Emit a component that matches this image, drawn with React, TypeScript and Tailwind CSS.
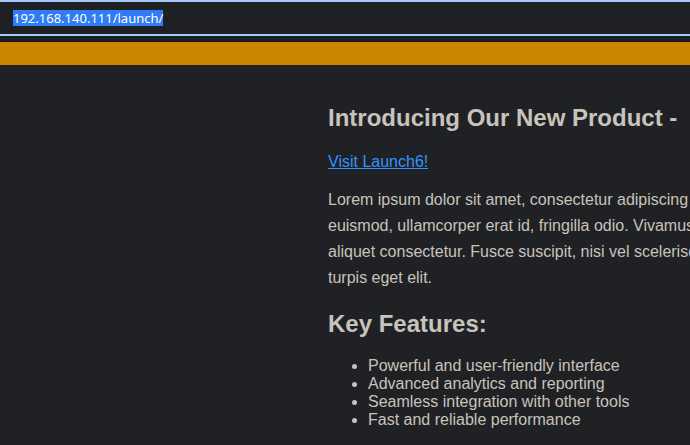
export default function App() {
  return (
    <div className="h-[445px] w-[690px] overflow-hidden bg-[#202124] font-['Liberation_Sans',Arial,sans-serif] text-[#c8c3bc]">
      {/* url bar */}
      <div className="h-9 border-y-2 border-[#a8c7fa] bg-[#1f2023] flex items-center pl-[13px]">
        <span className="bg-[#2f7cf6] text-white text-[13px] leading-[16px] font-['Noto_Sans',sans-serif]">
          192.168.140.111/launch/
        </span>
      </div>
      <div className="h-[6px] bg-[#1c1e25] border-b border-[#15161a]" />
      <div className="h-[23px] bg-[#cc8500]" />

      <div className="flex">
        <div className="w-[328px] shrink-0" />
        <div className="w-[520px] shrink-0 pt-[39px]">
          <h2 className="text-[24px] font-bold leading-[28px]">Introducing Our New Product -</h2>
          <a href="#" className="block mt-[21px] text-[16px] leading-[18px] text-[#3391ff] underline">
            Visit Launch6!
          </a>
          <p className="mt-[16px] text-[16px] leading-[26px] whitespace-nowrap">
            Lorem ipsum dolor sit amet, consectetur adipiscing elit. Sed
            <br />
            euismod, ullamcorper erat id, fringilla odio. Vivamus ut massa
            <br />
            aliquet consectetur. Fusce suscipit, nisi vel scelerisque
            <br />
            turpis eget elit.
          </p>
          <h2 className="mt-[19px] text-[24px] font-bold leading-[28px]">Key Features:</h2>
          <ul className="mt-[19px] list-disc pl-10 text-[16px] leading-[18px]">
            <li>Powerful and user-friendly interface</li>
            <li>Advanced analytics and reporting</li>
            <li>Seamless integration with other tools</li>
            <li>Fast and reliable performance</li>
          </ul>
        </div>
      </div>
    </div>
  );
}
